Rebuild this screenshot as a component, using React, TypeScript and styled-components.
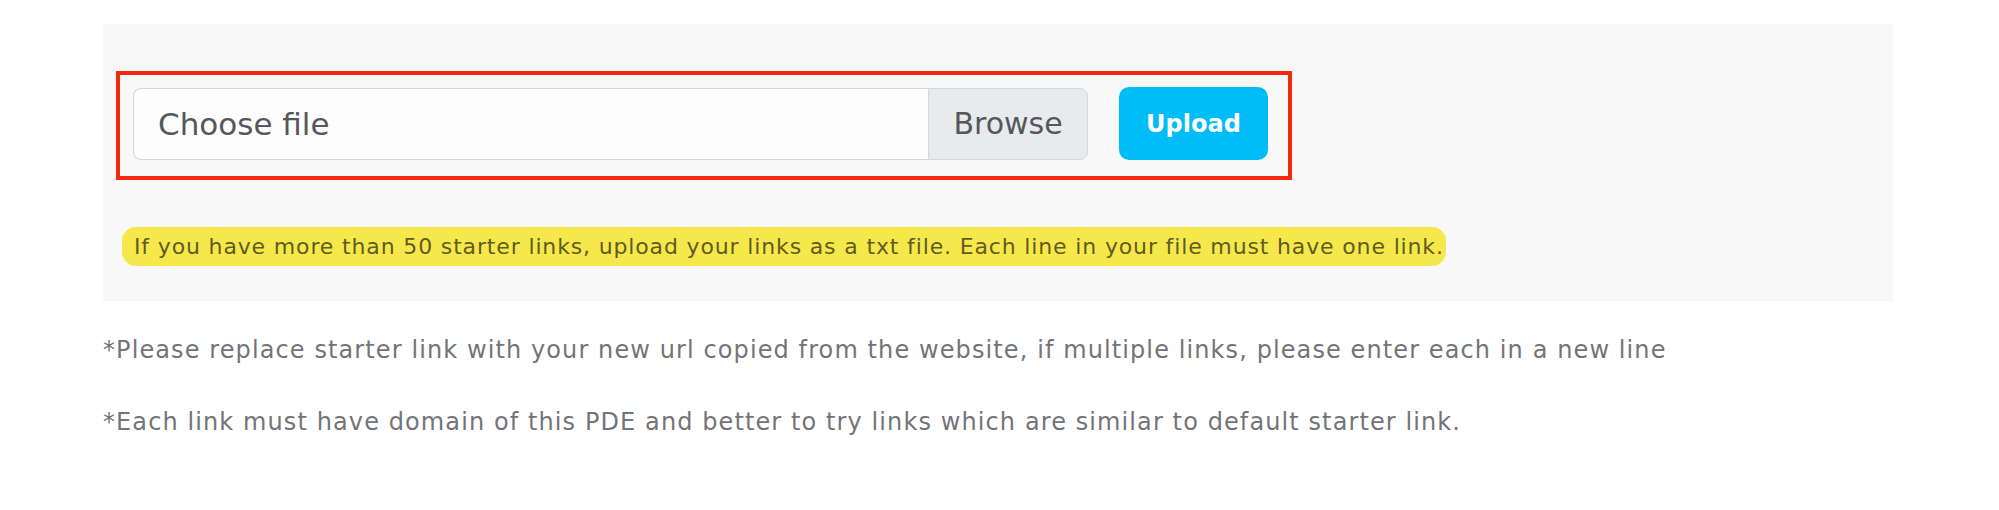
import styled, { createGlobalStyle } from 'styled-components';

const GlobalStyle = createGlobalStyle`
  html, body {
    margin: 0;
    padding: 0;
    background: #ffffff;
  }
  body {
    font-family: 'DejaVu Sans', 'Open Sans', sans-serif;
  }
`;

const Page = styled.div`
  width: 1790px;
  padding: 24px 0 40px 103px;
`;

const Panel = styled.section`
  background: #f8f8f9;
  padding: 47px 0 35px 13px;
`;

const UploadBox = styled.div`
  display: inline-flex;
  align-items: center;
  border: 4px solid #f2280f;
  padding: 12px 20px 16px 13px;
`;

const InputGroup = styled.div`
  display: flex;
  width: 955px;
  height: 72px;
`;

const FileName = styled.div`
  flex: 1;
  display: flex;
  align-items: center;
  padding-left: 24px;
  background: #fdfdfe;
  border: 1px solid #d4d6d9;
  border-right: none;
  border-radius: 8px 0 0 8px;
  font-size: 31px;
  color: #55575b;
`;

const BrowseLabel = styled.div`
  width: 160px;
  display: flex;
  align-items: center;
  justify-content: center;
  background: #e9eaec;
  border: 1px solid #d4d6d9;
  border-radius: 0 8px 8px 0;
  box-sizing: border-box;
  font-size: 30px;
  color: #55575b;
`;

const UploadButton = styled.button`
  margin-left: 31px;
  width: 149px;
  height: 73px;
  border: none;
  border-radius: 10px;
  background: #00bdf7;
  color: #ffffff;
  font-family: inherit;
  font-size: 24px;
  font-weight: 700;
`;

const Hint = styled.div`
  display: inline-block;
  margin: 47px 0 0 6px;
  height: 39px;
  line-height: 39px;
  padding: 0 2px 0 12px;
  border-radius: 14px;
  background: #f6e84b;
  color: #5f5c22;
  font-size: 22px;
  letter-spacing: 0.85px;
`;

const Note = styled.p<{ $first?: boolean }>`
  margin: ${(p) => (p.$first ? '32px' : '38px')} 0 0;
  line-height: 34px;
  font-size: 24px;
  letter-spacing: 1.1px;
  color: #737478;
`;

export default function App() {
  return (
    <Page>
      <GlobalStyle />
      <Panel>
        <UploadBox>
          <InputGroup>
            <FileName>Choose file</FileName>
            <BrowseLabel>Browse</BrowseLabel>
          </InputGroup>
          <UploadButton>Upload</UploadButton>
        </UploadBox>
        <div>
          <Hint>
            If you have more than 50 starter links, upload your links as a txt file. Each line in your file must have one link.
          </Hint>
        </div>
      </Panel>
      <Note $first>
        *Please replace starter link with your new url copied from the website, if multiple links, please enter each in a new line
      </Note>
      <Note>*Each link must have domain of this PDE and better to try links which are similar to default starter link.</Note>
    </Page>
  );
}
